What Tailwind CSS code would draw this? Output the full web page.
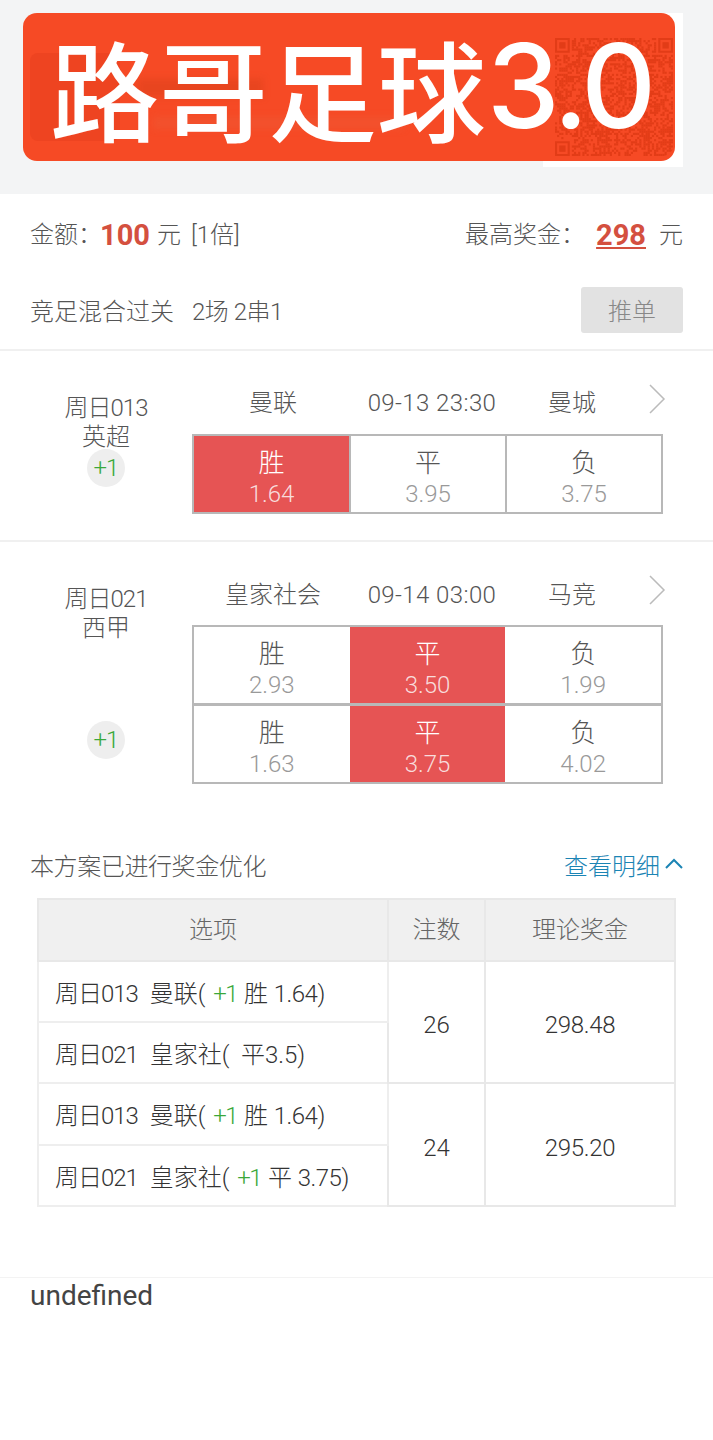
<!DOCTYPE html>
<html lang="zh-CN">
<head>
    <meta charset="UTF-8">
    <meta name="viewport" content="width=device-width, initial-scale=1.0">
    <title>路哥足球3.0</title>
    <script src="https://cdn.jsdelivr.net/npm/@tailwindcss/browser@4"></script>
</head>
<body class="bg-white font-['Roboto','Noto_Sans_CJK_SC',sans-serif] font-light text-[24px] leading-[30px] text-[#555]">
<div class="w-[713px] h-[1440px] overflow-hidden">

    <!-- banner -->
    <div class="relative h-[194px] bg-[#f3f4f5] pt-[13px] pl-[23px]">
        <div class="absolute left-[543px] top-[13px] w-[140px] h-[154px] bg-white"></div>
        <div class="relative w-[652px] h-[148px] rounded-[14px] bg-[#f64a25]">
            <div class="absolute left-[7px] top-[40px] w-[90px] h-[88px] rounded-[8px] bg-[#ee4421]"></div>
            <div class="absolute left-[115px] top-[66px] w-[125px] h-[18px] bg-[#e8451f] blur-[3px]"></div>
            <div class="absolute left-[130px] top-[104px] w-[250px] h-[12px] bg-[#f2512d] blur-[3px]"></div>
            <svg id="qr" class="absolute left-[532px] top-[25px] rounded-br-[10px]" width="118" height="118" viewBox="0 0 56 56"></svg>
            <div class="absolute left-[27px] top-0 h-[146px] flex items-center whitespace-nowrap font-['Noto_Sans_CJK_SC',sans-serif] font-medium text-[109px] leading-none text-white">路哥足球<span class="font-['Inter',sans-serif] font-medium text-[116px] tracking-[-4px] ml-[1px]">3.0</span></div>
        </div>
    </div>

    <!-- summary -->
    <div class="h-[82px] pl-[30px] pr-[30px] flex items-center justify-between">
        <div class="flex items-center whitespace-nowrap">金额：<span class="ml-[-2px] font-bold text-[29px] text-[#d4503f]">100</span><span class="ml-[7px]">元</span><span class="ml-[10px]">[1倍]</span></div>
        <div class="flex items-center whitespace-nowrap">最高奖金：<span class="ml-[11px] font-bold text-[29px] text-[#d4503f] underline">298</span><span class="ml-[13px]">元</span></div>
    </div>
    <div class="h-[75px] pl-[30px] pr-[30px] flex items-start justify-between border-b-2 border-[#f0f0f0]">
        <div class="pt-[21px] whitespace-nowrap">竞足混合过关<span class="ml-[18px] tracking-[-0.5px]">2场 2串1</span></div>
        <div class="mt-[11px] pt-[3px] w-[102px] h-[46px] rounded-[3px] bg-[#e2e2e2] text-[#888] flex items-center justify-center">推单</div>
    </div>

    <!-- match 1 -->
    <div class="h-[191px] flex border-b-2 border-[#f0f0f0]">
        <div class="w-[192px] pl-[20px] pt-[43px] flex flex-col items-center text-center">
            <div class="h-[29px] leading-[29px] tracking-[-1px]">周日013</div>
            <div class="h-[29px] leading-[29px]">英超</div>
            <div class="mt-[-3px] w-[38px] h-[38px] rounded-full bg-[#eeeeee] flex items-center justify-center tracking-[-1px] text-[#3aa83a]">+1</div>
        </div>
        <div class="relative w-[471px] pt-[37px]">
            <div class="flex items-center h-[30px] text-center">
                <div class="w-[162px]">曼联</div>
                <div class="w-[156px] tracking-[0.4px]">09-13 23:30</div>
                <div class="w-[124px]">曼城</div>
            </div>
            <svg class="absolute right-[-3px] top-[33px]" width="18" height="30" viewBox="0 0 18 30" fill="none" stroke="#bbbbbb" stroke-width="1.5"><path d="M2 1l14 14L2 29"/></svg>
            <div class="mt-[16px] grid grid-cols-[155px_156px_156px] border-2 border-[#b8b8b8] h-[80px]">
                <div class="bg-[#e65454] text-white flex flex-col items-center pt-[12px]"><span class="h-[31px] text-[26px]">胜</span><span class="text-[#f8dcdc]">1.64</span></div>
                <div class="border-l-2 border-[#b8b8b8] flex flex-col items-center pt-[12px]"><span class="h-[31px] text-[26px]">平</span><span class="text-[#999]">3.95</span></div>
                <div class="border-l-2 border-[#b8b8b8] flex flex-col items-center pt-[12px]"><span class="h-[31px] text-[26px]">负</span><span class="text-[#999]">3.75</span></div>
            </div>
        </div>
    </div>

    <!-- match 2 -->
    <div class="h-[283px] flex">
        <div class="w-[192px] pl-[20px] pt-[43px] flex flex-col items-center text-center">
            <div class="h-[29px] leading-[29px] tracking-[-1px]">周日021</div>
            <div class="h-[29px] leading-[29px]">西甲</div>
            <div class="mt-[78px] w-[38px] h-[38px] rounded-full bg-[#eeeeee] flex items-center justify-center tracking-[-1px] text-[#3aa83a]">+1</div>
        </div>
        <div class="relative w-[471px] pt-[38px]">
            <div class="flex items-center h-[30px] text-center">
                <div class="w-[162px]">皇家社会</div>
                <div class="w-[156px] tracking-[0.4px]">09-14 03:00</div>
                <div class="w-[124px]">马竞</div>
            </div>
            <svg class="absolute right-[-3px] top-[33px]" width="18" height="30" viewBox="0 0 18 30" fill="none" stroke="#bbbbbb" stroke-width="1.5"><path d="M2 1l14 14L2 29"/></svg>
            <div class="mt-[15px] grid grid-cols-3 border-2 border-[#b8b8b8] h-[80px]">
                <div class="flex flex-col items-center pt-[12px]"><span class="h-[31px] text-[26px]">胜</span><span class="text-[#999]">2.93</span></div>
                <div class="bg-[#e65454] text-white flex flex-col items-center pt-[12px]"><span class="h-[31px] text-[26px]">平</span><span class="text-[#f8dcdc]">3.50</span></div>
                <div class="flex flex-col items-center pt-[12px]"><span class="h-[31px] text-[26px]">负</span><span class="text-[#999]">1.99</span></div>
            </div>
            <div class="mt-[-1px] grid grid-cols-3 border-2 border-[#b8b8b8] h-[80px]">
                <div class="flex flex-col items-center pt-[12px]"><span class="h-[31px] text-[26px]">胜</span><span class="text-[#999]">1.63</span></div>
                <div class="bg-[#e65454] text-white flex flex-col items-center pt-[12px]"><span class="h-[31px] text-[26px]">平</span><span class="text-[#f8dcdc]">3.75</span></div>
                <div class="flex flex-col items-center pt-[12px]"><span class="h-[31px] text-[26px]">负</span><span class="text-[#999]">4.02</span></div>
            </div>
        </div>
    </div>

    <!-- optimisation note -->
    <div class="h-[73px] pl-[30px] pr-[30px] flex items-start justify-between">
        <div class="pt-[27px] tracking-[-0.4px]">本方案已进行奖金优化</div>
        <div class="pt-[27px] flex items-center text-[#1b84b4]">查看明细
            <svg class="ml-[5px] mt-[-8px]" width="18" height="11" viewBox="0 0 18 11" fill="none" stroke="#1b84b4" stroke-width="2"><path d="M1 10l8-8 8 8"/></svg>
        </div>
    </div>

    <!-- prize table -->
    <div class="pl-[37px]">
        <table class="w-[637px] table-fixed border-collapse text-[#333]">
            <tbody>
                <tr class="h-[62px] bg-[#f0f0f0] text-[#666] text-center">
                    <td class="w-[350px] border-2 border-[#e8e8e8]">选项</td>
                    <td class="w-[97px] border-2 border-[#e8e8e8]">注数</td>
                    <td class="w-[190px] border-2 border-[#e8e8e8]">理论奖金</td>
                </tr>
                <tr class="h-[61px]">
                    <td class="border-2 border-[#eeeeee] pl-[16px] pt-[4px] whitespace-pre"><span class="tracking-[-1px]">周日013</span>  曼联( <span class="ml-[2px] mr-[1px] tracking-[-1.5px] text-[#3aa83a]">+1</span> 胜 <span class="tracking-[-0.5px]">1.64)</span></td>
                    <td rowspan="2" class="border-2 border-[#e8e8e8] pt-[6px] text-center">26</td>
                    <td rowspan="2" class="border-2 border-[#e8e8e8] pt-[6px] text-center tracking-[-0.3px]">298.48</td>
                </tr>
                <tr class="h-[61px]">
                    <td class="border-2 border-[#eeeeee] pl-[16px] pt-[4px] whitespace-pre"><span class="tracking-[-1px]">周日021</span>  皇家社(  平3.5)</td>
                </tr>
                <tr class="h-[62px]">
                    <td class="border-2 border-[#eeeeee] pl-[16px] pt-[4px] whitespace-pre"><span class="tracking-[-1px]">周日013</span>  曼联( <span class="ml-[2px] mr-[1px] tracking-[-1.5px] text-[#3aa83a]">+1</span> 胜 <span class="tracking-[-0.5px]">1.64)</span></td>
                    <td rowspan="2" class="border-2 border-[#e8e8e8] pt-[6px] text-center">24</td>
                    <td rowspan="2" class="border-2 border-[#e8e8e8] pt-[6px] text-center tracking-[-0.3px]">295.20</td>
                </tr>
                <tr class="h-[61px]">
                    <td class="border-2 border-[#eeeeee] pl-[16px] pt-[4px] whitespace-pre"><span class="tracking-[-1px]">周日021</span>  皇家社( <span class="ml-[2px] mr-[1px] tracking-[-1.5px] text-[#3aa83a]">+1</span> 平 <span class="tracking-[-0.5px]">3.75)</span></td>
                </tr>
            </tbody>
        </table>
    </div>

    <!-- footer -->
    <div class="mt-[70px] border-t border-[#f3f3f3] pl-[30px] text-[28px] leading-[36px] font-normal text-[#444]">undefined</div>
</div>

<script>
    // faint qr code in the banner
    const svg = document.getElementById('qr');
    const ink = '#e23c17';
    let seed = 7;
    function next() {
        seed = (seed * 16807) % 2147483647;
        return seed / 2147483647;
    }
    function finder(x, y) {
        return `<path d="M${x} ${y}h7v7h-7zM${x + 1} ${y + 1}v5h5v-5z" fill-rule="evenodd" fill="${ink}"/><rect x="${x + 2}" y="${y + 2}" width="3" height="3" fill="${ink}"/>`;
    }
    let out = finder(0, 0) + finder(49, 0) + finder(0, 49);
    for (let y = 0; y < 56; y++) {
        for (let x = 0; x < 56; x++) {
            const inFinder = (x < 8 && y < 8) || (x > 47 && y < 8) || (x < 8 && y > 47);
            if (!inFinder && next() > 0.5) {
                out += `<rect x="${x}" y="${y}" width="1" height="1" fill="${ink}"/>`;
            }
        }
    }
    svg.innerHTML = out;
</script>
</body>
</html>
